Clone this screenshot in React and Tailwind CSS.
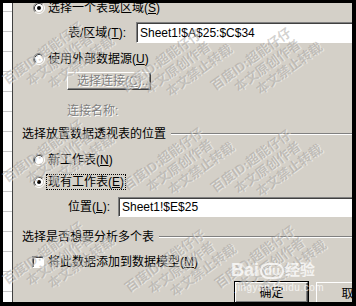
import React from "react";

const raisedBtn =
  "border-t border-l border-t-white border-l-white border-b border-r border-b-[#404040] border-r-[#404040] shadow-[inset_-1px_-1px_0_#808080] bg-[#d4d0c8]";
const sunken =
  "bg-white border-t border-l border-t-[#808080] border-l-[#808080] border-b border-r border-b-white border-r-white shadow-[inset_1px_1px_0_#404040]";

function Radio({ checked }) {
  return (
    <svg width="12" height="12" viewBox="0 0 12 12" className="shrink-0">
      <circle cx="6" cy="6" r="4.5" fill="#fff" />
      <path d="M2.11 9.89 A5.5 5.5 0 0 1 9.89 2.11" fill="none" stroke="#808080" />
      <path d="M9.89 2.11 A5.5 5.5 0 0 1 2.11 9.89" fill="none" stroke="#fff" />
      <path d="M2.82 9.18 A4.5 4.5 0 0 1 9.18 2.82" fill="none" stroke="#404040" />
      <path d="M9.18 2.82 A4.5 4.5 0 0 1 2.82 9.18" fill="none" stroke="#d4d0c8" />
      {checked && <circle cx="6" cy="6" r="2" fill="#000" />}
    </svg>
  );
}

function GroupTitle({ children }) {
  return (
    <div className="h-[16px] flex items-center pl-[9px]">
      <span className="whitespace-nowrap">{children}</span>
      <div className="flex-1 ml-[5px] h-[2px] border-t border-t-[#808080] border-b border-b-white" />
    </div>
  );
}

function Watermark({ x, y }) {
  return (
    <div
      className="absolute origin-top-left -rotate-[36deg] text-[13px] font-bold leading-[15px] text-[#9c9994]/45 [text-shadow:1px_1px_0_rgba(255,255,255,0.45)] whitespace-nowrap pointer-events-none"
      style={{ left: x, top: y }}
    >
      <div>百度ID:超能仔仔</div>
      <div className="pl-[18px]">本文原创作者</div>
      <div className="pl-[34px]">本文禁止转载</div>
    </div>
  );
}

const marks = [
  [0, 72], [118, 80], [208, 78],
  [0, 170], [120, 178], [208, 180],
  [0, 272], [122, 280], [212, 276],
];

export default function App() {
  return (
    <div className="w-[356px] h-[306px] bg-black flex flex-col overflow-hidden text-[12px] leading-[16px] text-black font-[Liberation_Sans,Noto_Sans_CJK_SC,sans-serif]">
      <div className="h-[3px] shrink-0" />
      <div className="flex flex-1 min-h-0 relative overflow-hidden">
        <div className="w-[3px] shrink-0" />
        <div className="w-[9px] shrink-0 bg-white flex flex-col">
          <div className="h-[9px] shrink-0 border-b border-[#c8c8c8]" />
          {Array.from({ length: 15 }).map((_, i) => (
            <div key={i} className="h-[20px] shrink-0 border-b border-[#c8c8c8]" />
          ))}
        </div>
        <div className="w-px shrink-0 bg-[#404040]" />

        <div className="flex-1 bg-[#d4d0c8] flex flex-col overflow-hidden">
          <div className="-mt-[3px] h-[16px] shrink-0 flex items-center pl-[20px] gap-[3px]">
            <Radio checked />
            <span>选择一个表或区域(<u>S</u>)</span>
          </div>

          <div className="mt-[6px] h-[21px] shrink-0 flex items-center pl-[55px]">
            <span className="w-[68px] shrink-0">表/区域(<u>T</u>):</span>
            <div className={`${sunken} flex-1 h-full flex items-center pl-[3px] border-r-0`}>
              Sheet1!$A$25:$C$34
            </div>
          </div>

          <div className="mt-[8px] h-[16px] shrink-0 flex items-center pl-[20px] gap-[3px]">
            <Radio />
            <span>使用外部数据源(<u>U</u>)</span>
          </div>

          <div className="mt-[5px] h-[18px] shrink-0 flex items-center pl-[54px]">
            <div className={`${raisedBtn} w-[84px] h-full flex items-center pl-[9px] overflow-hidden whitespace-nowrap text-[#808080] [text-shadow:1px_1px_0_#fff]`}>
              选择连接(<u>C</u>)...
            </div>
          </div>

          <div className="mt-[13px] h-[16px] shrink-0 flex items-center pl-[54px] text-[#808080] [text-shadow:1px_1px_0_#fff]">
            连接名称:
          </div>

          <div className="mt-[7px] shrink-0">
            <GroupTitle>选择放置数据透视表的位置</GroupTitle>
          </div>

          <div className="mt-[10px] h-[16px] shrink-0 flex items-center pl-[20px] gap-[3px]">
            <Radio />
            <span>新工作表(<u>N</u>)</span>
          </div>

          <div className="mt-[6px] h-[16px] shrink-0 flex items-center pl-[20px] gap-px">
            <Radio checked />
            <span className="h-full flex items-center px-px border border-dotted border-black">
              现有工作表(<u>E</u>)
            </span>
          </div>

          <div className="mt-[7px] h-[20px] shrink-0 flex items-center pl-[55px]">
            <span className="w-[50px] shrink-0">位置(<u>L</u>):</span>
            <div className={`${sunken} flex-1 h-full flex items-center pl-[3px] border-r-0`}>
              Sheet1!$E$25
            </div>
          </div>

          <div className="mt-[12px] shrink-0">
            <GroupTitle>选择是否想要分析多个表</GroupTitle>
          </div>

          <div className="mt-[9px] h-[16px] shrink-0 flex items-center pl-[19px] gap-[4px]">
            <div className={`${sunken} w-[12px] h-[12px] shrink-0`} />
            <span>将此数据添加到数据模型(<u>M</u>)</span>
          </div>

          <div className="mt-[11px] h-[23px] shrink-0 flex items-start pl-[221px] gap-[7px]">
            <div className="w-[75px] h-[23px] shrink-0 border border-black">
              <div className={`${raisedBtn} h-full flex items-center justify-center`}>确定</div>
            </div>
            <div className={`${raisedBtn} mt-px w-[75px] h-[23px] shrink-0 flex items-center justify-center`}>
              取消
            </div>
          </div>
        </div>
        <div className="w-[4px] shrink-0 bg-black" />

        {marks.map(([x, y], i) => (
          <Watermark key={i} x={x} y={y} />
        ))}

        <div className="absolute left-[231px] top-[258px] text-white/75 whitespace-nowrap pointer-events-none">
          <div className="flex items-end h-[18px] leading-[18px]">
            <span className="text-[18px] font-bold font-[Liberation_Sans,sans-serif]">Bai</span>
            <span className="text-[13px] font-bold px-[2px] rounded-full border-2 border-white/75 leading-[12px] mx-[1px]">du</span>
            <span className="text-[15px] font-bold">经验</span>
          </div>
          <div className="text-[10px] leading-[12px] mt-[3px] pl-[4px] tracking-[0.5px]">jingyan.baidu.com</div>
        </div>
      </div>
      <div className="h-[4px] shrink-0" />
    </div>
  );
}
